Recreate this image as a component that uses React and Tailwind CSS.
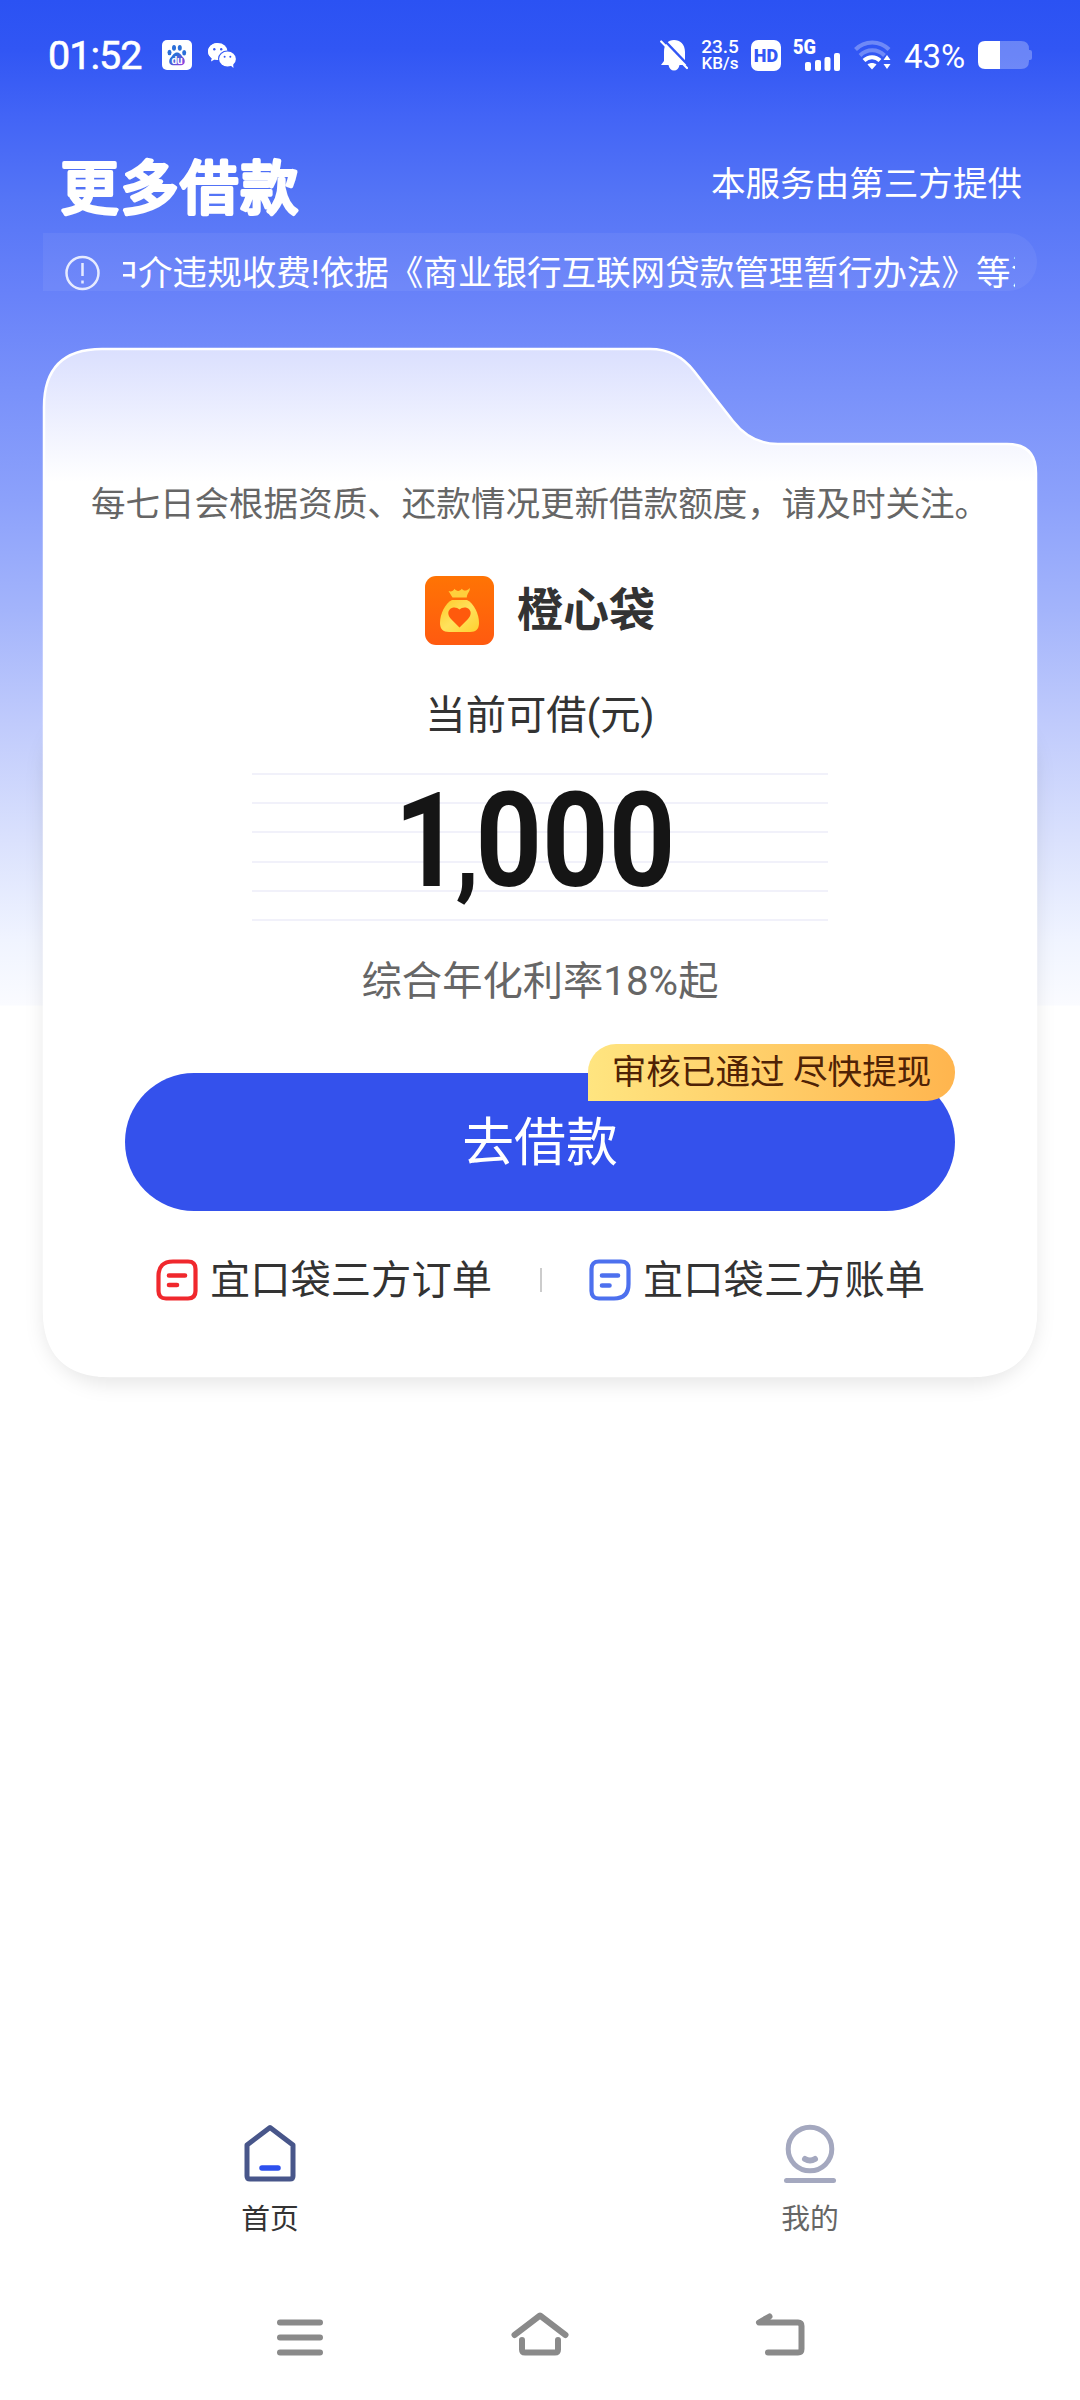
import React from "react";

const NOTICE = "中介违规收费!依据《商业银行互联网贷款管理暂行办法》等法规";

const BaiduIcon = () => (
  <svg width="30" height="30" viewBox="0 0 30 30">
    <defs>
      <linearGradient id="paw" x1="0" y1="0" x2="1" y2="1">
        <stop offset="0.3" stopColor="#2b6fd8" />
        <stop offset="1" stopColor="#9a3be0" />
      </linearGradient>
    </defs>
    <rect width="30" height="30" rx="5" fill="#fff" />
    <g fill="#2b6fd8">
      <ellipse cx="7.5" cy="12.5" rx="2" ry="2.7" />
      <ellipse cx="12" cy="7.8" rx="2" ry="2.9" />
      <ellipse cx="17.8" cy="7.8" rx="2" ry="2.9" />
      <ellipse cx="22.2" cy="12.8" rx="2" ry="2.7" />
    </g>
    <path d="M15 12.500c3 0 4 2.700 6 4.700 2.800 2.600 2.400 8-2 8H11c-4.400 0-4.800-5.400-2-8 2-2 3-4.700 6-4.700z" fill="url(#paw)" />
    <text x="15" y="23.500" textAnchor="middle" fontSize="10" fontWeight="700" fontFamily="Roboto" fill="#fff">du</text>
  </svg>
);

const WechatIcon = () => (
  <svg width="28" height="25" viewBox="0 0 28 25">
    <path d="M9.500 0C4.300 0 0 3.700 0 8.400c0 2.700 1.500 5 3.700 6.500L3 18.500l3.600-2c1 .3 2.100.4 3.200.4" fill="#fff" />
    <ellipse cx="9.800" cy="8.500" rx="9.800" ry="8.500" fill="#fff" />
    <ellipse cx="19.300" cy="15.800" rx="9.300" ry="8.300" fill="#3559f5" />
    <ellipse cx="19.500" cy="16" rx="8.400" ry="7.400" fill="#fff" />
    <path d="M22 22l3.500 3-.5-5z" fill="#fff" />
    <g fill="#3559f5">
      <circle cx="6.300" cy="6.200" r="1.200" />
      <circle cx="13.200" cy="6.200" r="1.200" />
      <circle cx="16.600" cy="13.700" r="1" />
      <circle cx="22.300" cy="13.700" r="1" />
    </g>
  </svg>
);

const MutedBellIcon = () => (
  <svg width="28" height="32" viewBox="0 0 28 32">
    <path d="M4 13C4 5 8 1 14 1s11 4 11 12v9l2.500 4H1L4 22z" fill="#fff" />
    <path d="M8.500 26h11c-.5 3.500-2.700 5.500-5.500 5.500s-5-2-5.500-5.500z" fill="#fff" />
    <path d="M3.500.5l25 26" stroke="#3357f5" strokeWidth="2.500" />
    <path d="M1.200 2.500L27 29" stroke="#fff" strokeWidth="2.200" strokeLinecap="round" />
  </svg>
);

const SignalIcon = () => (
  <svg className="overflow-visible" width="48" height="32" viewBox="0 0 48 32" fill="#fff">
    <text x="0" y="15" fontSize="20" fontWeight="900" fontFamily="Roboto" textLength="23" lengthAdjust="spacingAndGlyphs">5G</text>
    <rect x="12" y="23" width="6" height="9" rx="2" />
    <rect x="22" y="21" width="6" height="11" rx="2" />
    <rect x="31.500" y="18" width="6" height="14" rx="2" />
    <rect x="41" y="14" width="6" height="18" rx="2" />
  </svg>
);

const WifiIcon = () => (
  <svg width="38" height="30" viewBox="0 0 38 30" fill="none">
    <path d="M1.500 9.500c9-9.500 24.500-9.500 33.500 0" stroke="#fff" strokeOpacity="0.3" strokeWidth="4" />
    <path d="M6 15.500c7-7 17.500-7 24.500 0" stroke="#fff" strokeOpacity="0.3" strokeWidth="4" />
    <path d="M10 20.500c4.500-4.500 11.500-4.500 16 0" stroke="#fff" strokeWidth="4" />
    <path d="M18 29.500l-4.500-5c2.500-2 6.500-2 9 0z" fill="#fff" />
    <path d="M33 15l3.500 5h-7zM33 29l3.500-5h-7z" fill="#fff" />
  </svg>
);

const BatteryIcon = () => (
  <svg width="54" height="28" viewBox="0 0 54 28">
    <path d="M22 0h21q8 0 8 8v1h1q2 0 2 2v6q0 2-2 2h-1v1q0 8-8 8H22z" fill="#fff" fillOpacity="0.28" />
    <path d="M22 0H7Q0 0 0 7v14q0 7 7 7h15z" fill="#fff" />
  </svg>
);

const MoneyBagIcon = () => (
  <svg width="69" height="69" viewBox="0 0 69 69">
    <defs>
      <linearGradient id="logoBg" x1="0" y1="0" x2="0" y2="1">
        <stop offset="0" stopColor="#ff7404" />
        <stop offset="1" stopColor="#ff5a10" />
      </linearGradient>
      <linearGradient id="bag" x1="0" y1="0" x2="1" y2="1">
        <stop offset="0" stopColor="#ffc928" />
        <stop offset="0.5" stopColor="#ffe25c" />
        <stop offset="1" stopColor="#ffd02e" />
      </linearGradient>
    </defs>
    <rect width="69" height="69" rx="11" fill="url(#logoBg)" />
    <path d="M27.500 21.500L23.500 15c2.500 1 4.500.4 6-2.200 2 2.800 5.300 2.800 7.300 0 1.800 2.400 4.500 2.700 8-.8.400 4-2.800 5-3 9.500z" fill="#ffcf3c" />
    <path d="M27 24h15c7 3.500 12 14 12 23 0 6-3 9-9 9H24c-6 0-9-3-9-9 0-9 5-19.500 12-23z" fill="url(#bag)" />
    <path d="M34.500 51.500L26 43c-3.500-4-3.200-7.300-1.300-9.500 2.800-3 7.300-2.300 9.800 0 2.500-2.300 7-3 9.800 0 1.900 2.200 2.200 5.500-1.300 9.500z" fill="#ff5a0c" />
  </svg>
);

const OrderIcon = () => (
  <svg width="42" height="42" viewBox="0 0 42 42" fill="none" stroke="#f0282d" strokeWidth="4.200" strokeLinecap="round">
    <path d="M17 2.500h15q7.500 0 7.500 7.500v22q0 7.500-7.500 7.500H10q-7.500 0-7.500-7.500V17Q2.500 2.500 17 2.500z" />
    <path d="M13 16.500h16M13 26h8" strokeWidth="4.600" />
  </svg>
);

const BillIcon = () => (
  <svg width="42" height="42" viewBox="0 0 42 42" fill="none" stroke="#4d70ee" strokeWidth="4.200" strokeLinecap="round">
    <path d="M10 2.500h22q7.500 0 7.500 7.500v15Q39.500 39.500 25 39.500H10q-7.500 0-7.500-7.500V10Q2.500 2.500 10 2.500z" />
    <path d="M13 16.500h16M13 26.500h7.500" strokeWidth="4.600" />
  </svg>
);

const StatusBar = () => (
  <div className="flex h-[110px] justify-between pl-[48px] pr-[48px] text-white">
    <div className="flex items-center">
      <span className="w-[114px] pt-[2px] text-[39.500px] leading-none tracking-[-1px] [-webkit-text-stroke:0.600px_white]">01:52</span>
      <BaiduIcon />
      <div className="ml-[16px]"><WechatIcon /></div>
    </div>
    <div className="flex items-center">
      <MutedBellIcon />
      <div className="ml-[12px] w-[40px] text-center text-[19px] font-medium leading-[17px]">
        <p>23.5</p>
        <p className="text-[17px]">KB/s</p>
      </div>
      <div className="ml-[11px] flex h-[31px] w-[30px] items-center justify-center rounded-[7px] bg-white text-[18px] font-black text-[#3357f5]">HD</div>
      <div className="ml-[12px]"><SignalIcon /></div>
      <div className="ml-[13px]"><WifiIcon /></div>
      <span className="ml-[12px] w-[64px] whitespace-nowrap pt-[2px] text-[33px] leading-none">43%</span>
      <div className="ml-[10px]"><BatteryIcon /></div>
    </div>
  </div>
);

const Header = () => (
  <div>
    <div className="flex h-[123px] items-center justify-between pl-[59px] pr-[58px] text-white">
      <h1>
        <svg className="mt-[34px] overflow-visible" width="240" height="80" viewBox="0 0 240 80">
          <text
            x="1.500"
            y="59.500"
            fontSize="58"
            letterSpacing="1.900"
            fill="#fff"
            stroke="#fff"
            strokeWidth="4"
            strokeLinejoin="round"
            strokeLinecap="round"
          >
            更多借款
          </text>
        </svg>
      </h1>
      <p className="mt-[26px] text-[34.560px] leading-none">本服务由第三方提供</p>
    </div>
    {/* Notice marquee */}
    <div className="ml-[43px] flex h-[58px] w-[994px] items-start overflow-hidden rounded-r-[29px] bg-white/6 pl-[22px] pt-[22px] text-white">
      <svg width="35" height="36" viewBox="0 0 35 36" fill="none" stroke="#e6ebff" strokeWidth="2.500">
        <circle cx="17.500" cy="18" r="16" />
        <path d="M17.500 8v13M17.500 25.500v3" />
      </svg>
      <div className="ml-[23px] flex h-[36px] w-[892px] overflow-hidden">
        <p className="ml-[-19.500px] whitespace-nowrap text-[34.560px] leading-[36px]">{NOTICE}</p>
      </div>
    </div>
  </div>
);

const CardShape = () => (
  <svg className="absolute -left-[43px] -top-[20px]" width="1080" height="1110" viewBox="0 328 1080 1110">
    <defs>
      <linearGradient id="cardFill" gradientUnits="userSpaceOnUse" x1="0" y1="348" x2="0" y2="482">
        <stop offset="0" stopColor="#dadffe" />
        <stop offset="1" stopColor="#ffffff" />
      </linearGradient>
      <filter id="cardShadow" x="-10%" y="-10%" width="120%" height="120%">
        <feDropShadow dx="0" dy="8" stdDeviation="9" floodColor="#000" floodOpacity="0.09" />
      </filter>
    </defs>
    <rect x="43" y="700" width="994" height="677" rx="66" fill="#fff" filter="url(#cardShadow)" />
    <path
      d="M44 407Q44 349 102 349H650Q677 349 694 371L733 421Q751 444 778 444H1007Q1036 444 1036 473V1310Q1036 1376 970 1376H110Q44 1376 44 1310z"
      fill="url(#cardFill)"
      stroke="#fff"
      strokeWidth="2.500"
    />
  </svg>
);

const LoanCard = () => (
  <div className="relative mx-[43px] mt-[57px] h-[1029px]">
    <CardShape />
    <div className="relative flex flex-col items-center pt-[138px]">
      <p className="whitespace-nowrap text-[34.560px] leading-[36px] text-[#666]">每七日会根据资质、还款情况更新借款额度，请及时关注。</p>
      <div className="mt-[54px] flex items-center gap-[23px]">
        <MoneyBagIcon />
        <h2 className="text-[46px] font-bold leading-[69px] text-[#333]">橙心袋</h2>
      </div>
      <p className="mt-[51px] text-[40.300px] leading-[40px] text-[#333]">当前可借(元)</p>
      {/* Amount over ruled lines */}
      <div className="relative mt-[37px] flex h-[148px] w-[576px] flex-col justify-between">
        {[0, 1, 2, 3, 4, 5].map((line) => (
          <div key={line} className="h-[2px] bg-[#f1f1fa]" />
        ))}
        <div className="absolute inset-0 flex items-center justify-center pr-[10px] pb-[12px]">
          <span className="scale-x-[0.88] text-[132px] font-bold leading-none text-[#151515]">
            1<span className="-ml-[6px] -mr-[4px] text-[108px]">,</span>000
          </span>
        </div>
      </div>
      <p className="mt-[41px] text-[40.300px] leading-[40px] text-[#666]">综合年化利率18%起</p>
      <div className="relative mt-[71px]">
        <button className="block h-[138px] w-[830px] rounded-full bg-[#3451ec] pt-[4px] text-[51.800px] leading-none text-white">去借款</button>
        <span className="absolute right-0 -top-[29px] flex h-[57px] w-[367px] items-center justify-center whitespace-nowrap rounded-[28px] rounded-bl-none bg-linear-to-r from-[#ffe580] to-[#ffb54e] text-[34.560px] leading-none text-[#4f2205]">
          审核已通过 尽快提现
        </span>
      </div>
      <div className="ml-[1px] mt-[46px] flex items-center text-[40.300px] leading-[42px] text-[#333]">
        <OrderIcon />
        <span className="ml-[12px] pt-[3px]">宜口袋三方订单</span>
        <span className="mx-[47.500px] h-[24px] w-[2px] bg-[#ccc]" />
        <BillIcon />
        <span className="ml-[12px] pt-[3px]">宜口袋三方账单</span>
      </div>
    </div>
  </div>
);

const TabBar = () => (
  <div className="grid grid-cols-2 text-[28.800px] leading-[30px]">
    <div className="flex flex-col items-center gap-[21px] text-[#333]">
      <svg width="56" height="60" viewBox="0 0 56 60" fill="none" strokeLinecap="round" strokeLinejoin="round">
        <path d="M28 4.500L51 22v31q0 3-3 3H8q-3 0-3-3V22z" stroke="#48568a" strokeWidth="5" />
        <path d="M20 45h16" stroke="#2c50ee" strokeWidth="5.500" />
      </svg>
      <span>首页</span>
    </div>
    <div className="flex flex-col items-center gap-[21px] text-[#666]">
      <svg className="overflow-visible" width="56" height="60" viewBox="0 0 56 60" fill="none" stroke="#a4a8bf" strokeWidth="5" strokeLinecap="round">
        <circle cx="28" cy="26" r="21.800" />
        <path d="M4.500 57.500h47" />
        <path d="M23 36q5 3 10 0" strokeWidth="6" />
      </svg>
      <span>我的</span>
    </div>
  </div>
);

const SystemNav = () => (
  <div className="flex justify-center gap-[180px]">
    <svg width="60" height="50" viewBox="0 0 60 50" stroke="#8a8a8a" strokeWidth="6" strokeLinecap="round">
      <path d="M10 14.500h40M10 29.500h40M10 44.500h40" />
    </svg>
    <svg width="60" height="50" viewBox="0 0 60 50" fill="none" stroke="#8a8a8a" strokeWidth="6" strokeLinecap="round" strokeLinejoin="round">
      <path d="M4.500 27L30 7.500 55.500 27M12 32v9.500q0 3 3 3h30q3 0 3-3V32" />
    </svg>
    <svg width="60" height="50" viewBox="0 0 60 50" fill="none" stroke="#8a8a8a" strokeWidth="6" strokeLinecap="round" strokeLinejoin="round">
      <path d="M19.500 8.500L9 14.500h39q3.500 0 3.500 3.500v23q0 3.500-3.500 3.500H18" />
    </svg>
  </div>
);

const App = () => {
  return (
    <div className="flex h-[2400px] w-[1080px] flex-col overflow-hidden bg-white bg-[linear-gradient(180deg,#2b52f3_0px,#3156f4_50px,#4264f6_115px,#5575f6_200px,#6781f9_290px,#7991fa_390px,#8ca1fb_500px,#a3b4fb_610px,#bfcafc_720px,#dae1fd_840px,#f0f4ff_940px,#fafbff_1005px,#ffffff_1006px)] font-[Roboto,'Noto_Sans_CJK_SC',sans-serif]">
      <StatusBar />
      <Header />
      <LoanCard />
      <div className="mt-[746px]">
        <TabBar />
      </div>
      <div className="mt-[74px]">
        <SystemNav />
      </div>
    </div>
  );
};

export default App;
